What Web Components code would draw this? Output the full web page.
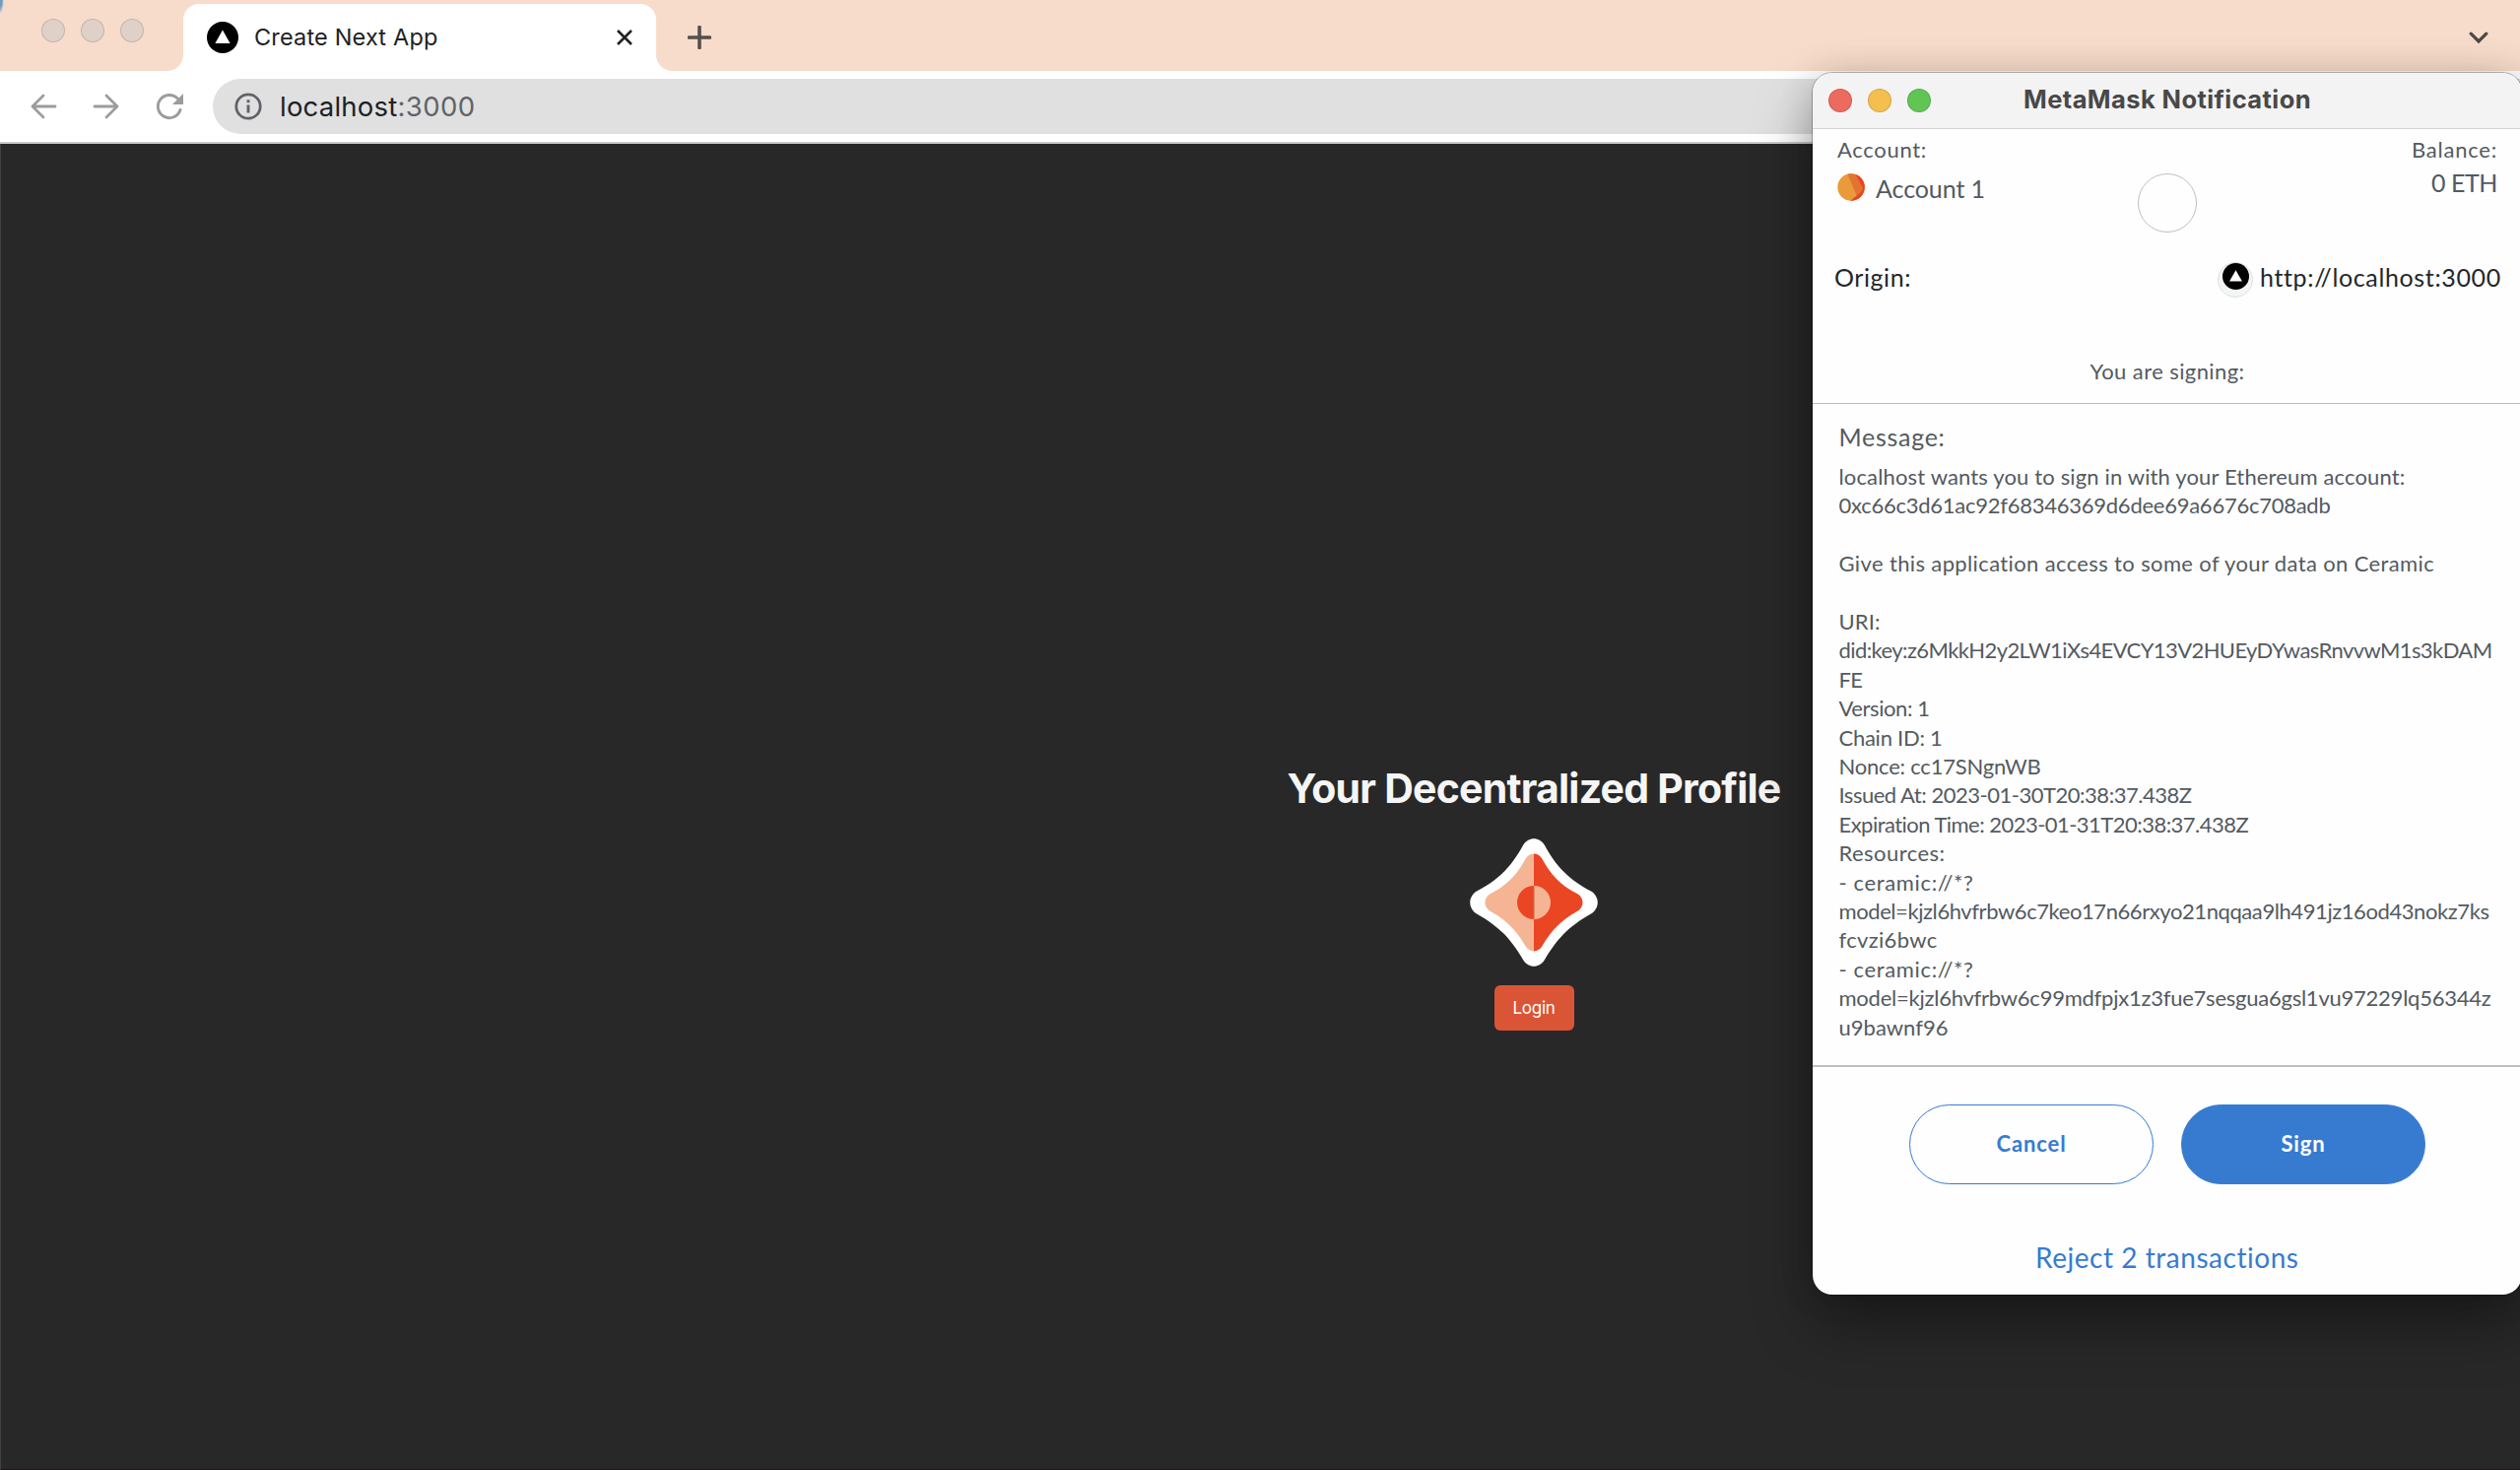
<!DOCTYPE html>
<html lang="en">
<head>
<meta charset="utf-8">
<title>Create Next App</title>
<style>
html,body{margin:0;padding:0;background:#282828}
body{width:2558px;height:1492px;overflow:hidden;font-family:Inter,"Liberation Sans",sans-serif}
</style>
</head>
<body>
<desktop-screen></desktop-screen>
<script>
const define = (name, html, cb) => customElements.define(name, class extends HTMLElement {
  connectedCallback() {
    if (this.shadowRoot) return;
    const t = document.createElement('template');
    t.innerHTML = html;
    this.attachShadow({mode: 'open'}).append(t.content.cloneNode(true));
    if (cb) cb(this);
  }
});

/* A single line of text tracked out to the width given in its w attribute. */
define('tracked-text', `<style>
:host{display:block;white-space:pre;flex:none}
span{display:inline-block}
</style><span><slot></slot></span>`, el => {
  const w = +el.getAttribute('w');
  el.style.width = w + 'px';
  const s = el.shadowRoot.querySelector('span');
  const n = el.textContent.length;
  const d = (w - s.getBoundingClientRect().width) / n;
  s.style.letterSpacing = d.toFixed(3) + 'px';
});

define('traffic-lights', `<style>
:host{display:flex;gap:16px}
i{width:24px;height:24px;border-radius:50%;box-sizing:border-box;border:1px solid rgba(0,0,0,.13)}
i:nth-of-type(1){background:var(--a,#dfd0c8)}
i:nth-of-type(2){background:var(--b,#dfd0c8)}
i:nth-of-type(3){background:var(--c,#dfd0c8)}
</style><i></i><i></i><i></i>`);

define('next-favicon', `<style>
:host{display:block;width:32px;height:32px;flex:none}svg{display:block;width:100%;height:100%}
</style><svg viewBox="0 0 32 32"><circle cx="16" cy="16" r="16" fill="#000"/><path d="M16 8.6 23.6 22H8.4Z" fill="#fff"/></svg>`);

define('tab-strip', `<style>
:host{display:flex;height:72px;background:radial-gradient(ellipse 4px 14px at 0 0,#6d9cc4 0,#6d9cc4 50%,transparent 100%),#f7dccb;align-items:flex-start}
traffic-lights{margin:19px 0 0 42px;width:104px;flex:none}
.tab{position:relative;margin:4px 0 0 40px;width:480px;height:68px;box-sizing:border-box;background:#fff;border-radius:16px 16px 0 0;display:flex;align-items:center;padding:0 24px;flex:none}
.tab:before,.tab:after{content:"";position:absolute;bottom:0;width:16px;height:16px}
.tab:before{left:-16px;background:radial-gradient(circle at 0 0,transparent 15.5px,#fff 16.2px)}
.tab:after{right:-16px;background:radial-gradient(circle at 100% 0,transparent 15.5px,#fff 16.2px)}
.title{margin-left:16px;font-size:23.5px;line-height:30px;color:#202124}
.x{margin-left:auto}
.plus{margin:26px 0 0 32px}
.chev{margin:32px 32px 0 auto}
svg{display:block}
</style>
<traffic-lights></traffic-lights>
<div class="tab"><next-favicon></next-favicon><tracked-text class="title" w="186.5">Create Next App</tracked-text>
<svg class="x" width="16" height="16" viewBox="0 0 16 16"><path d="M1 1 15 15M15 1 1 15" stroke="#202124" stroke-width="2.6"/></svg></div>
<svg class="plus" width="24" height="24" viewBox="0 0 24 24"><path d="M12 1.5V22.500M1.500 12H22.500" stroke="#574f4b" stroke-width="3.6" stroke-linecap="round"/></svg>
<svg class="chev" width="20" height="13" viewBox="0 0 20 13"><path d="M2.200 2.200 10 10 17.800 2.200" fill="none" stroke="#4e4845" stroke-width="3.2" stroke-linecap="round"/></svg>`);

define('tool-bar', `<style>
:host{display:flex;height:74px;box-sizing:border-box;background:#fff;border-bottom:2px solid #c9cccb;align-items:center}
svg{display:block;flex:none}
.b{margin-left:30px}.f{margin-left:36px}.r{margin-left:36px}
.omni{margin-left:30px;flex:1;height:56px;border-radius:28px 0 0 28px;background:#e0e0e0;display:flex;align-items:center;padding-left:22px}
.url{margin-left:18px;font-size:27.5px;line-height:36px;color:#202124;display:flex}
.port{color:#5f6368}
</style>
<svg class="b" width="28" height="26" viewBox="0 0 28 26"><path d="M26 13H3M14 2 3 13 14 24" fill="none" stroke="#9c9c9c" stroke-width="2.800" stroke-linecap="round" stroke-linejoin="round"/></svg>
<svg class="f" width="28" height="26" viewBox="0 0 28 26"><path d="M2 13H25M14 2 25 13 14 24" fill="none" stroke="#9c9c9c" stroke-width="2.800" stroke-linecap="round" stroke-linejoin="round"/></svg>
<svg class="r" width="28" height="28" viewBox="0 0 28 28"><path d="M25 17.500A11.600 11.600 0 1 1 22.300 6" fill="none" stroke="#9c9c9c" stroke-width="2.900" stroke-linecap="round"/><path d="M28 1V12H17Z" fill="#9c9c9c"/></svg>
<div class="omni"><svg width="28" height="28" viewBox="0 0 28 28"><circle cx="14" cy="14" r="12.200" fill="none" stroke="#5f6368" stroke-width="2.800"/><path d="M14 12.500V20.500" stroke="#5f6368" stroke-width="2.900"/><path d="M14 7.300V10.200" stroke="#5f6368" stroke-width="2.900"/></svg>
<div class="url"><tracked-text w="119.5">localhost</tracked-text><tracked-text class="port" w="79">:3000</tracked-text></div></div>`);

define('ceramic-logo', `<style>:host{display:block;width:130px;height:130px}svg{display:block}</style>
<svg width="130" height="130" viewBox="-65 -65 130 130">
<defs><path id="s" d="M-11-58C-6-67 6-67 11-58C22-38 34-24 58-11.500C67-6 67 6 58 11.500C34 25 23 38 11 58C6 67-6 67-11 58C-23 38-34 25-58 11.500C-67 6-67-6-58-11.500C-34-24-22-38-11-58Z"/>
<clipPath id="l"><rect x="-65" y="-65" width="65" height="130"/></clipPath><clipPath id="r"><rect x="0" y="-65" width="65" height="130"/></clipPath></defs>
<use href="#s" fill="#fff"/>
<g clip-path="url(#l)"><use href="#s" transform="scale(.765)" fill="#f5b493"/><circle r="17" fill="#ea4624"/></g>
<g clip-path="url(#r)"><use href="#s" transform="scale(.765)" fill="#ea4624"/><circle r="17" fill="#f5b493"/></g>
<path d="M0-16.500V16.500" stroke="#c96a48" stroke-width="1"/></svg>`);

define('login-page', `<style>
:host{display:flex;flex-direction:column;align-items:center;height:1346px;box-sizing:border-box;background:#282828;padding:629px 0 0 555px;border-left:1px solid #424242;border-bottom:1px solid #1c1518}
h1{margin:0;font-size:41px;line-height:50px;font-weight:700;color:#f5f5f5}
ceramic-logo{margin-top:26px}
button{margin:19px 0 0;width:81px;height:46px;padding:0;border:0;border-radius:6px;background:#da5536;color:#fff;font:400 17px/46px Inter,sans-serif;display:flex;justify-content:center}
</style>
<h1><tracked-text w="501">Your Decentralized Profile</tracked-text></h1>
<ceramic-logo></ceramic-logo>
<button><tracked-text w="43">Login</tracked-text></button>`);

define('message-body', `<style>
:host{display:block;box-sizing:border-box;height:673px;padding:16px 0 0 26.500px;border-bottom:2px solid #bbc0c5;color:#535a61;font-size:22px;line-height:29.4px}
.h{font-size:25px;line-height:34px;margin-bottom:9px}
.gap{height:29.4px}
</style>
<tracked-text class="h" w="108">Message:</tracked-text>
<tracked-text w="575">localhost wants you to sign in with your Ethereum account:</tracked-text>
<tracked-text w="499">0xc66c3d61ac92f68346369d6dee69a6676c708adb</tracked-text>
<div class="gap"></div>
<tracked-text w="605">Give this application access to some of your data on Ceramic</tracked-text>
<div class="gap"></div>
<tracked-text w="42">URI:</tracked-text>
<tracked-text w="663">did:key:z6MkkH2y2LW1iXs4EVCY13V2HUEyDYwasRnvvwM1s3kDAM</tracked-text>
<tracked-text w="24">FE</tracked-text>
<tracked-text w="92">Version: 1</tracked-text>
<tracked-text w="105">Chain ID: 1</tracked-text>
<tracked-text w="205">Nonce: cc17SNgnWB</tracked-text>
<tracked-text w="358">Issued At: 2023-01-30T20:38:37.438Z</tracked-text>
<tracked-text w="416">Expiration Time: 2023-01-31T20:38:37.438Z</tracked-text>
<tracked-text w="108">Resources:</tracked-text>
<tracked-text w="137">- ceramic://*?</tracked-text>
<tracked-text w="660">model=kjzl6hvfrbw6c7keo17n66rxyo21nqqaa9lh491jz16od43nokz7ks</tracked-text>
<tracked-text w="100">fcvzi6bwc</tracked-text>
<tracked-text w="137">- ceramic://*?</tracked-text>
<tracked-text w="662">model=kjzl6hvfrbw6c99mdfpjx1z3fue7sesgua6gsl1vu97229lq56344z</tracked-text>
<tracked-text w="111">u9bawnf96</tracked-text>`);

define('account-header', `<style>
:host{display:flex;flex-direction:column;height:279px;box-sizing:border-box;border-bottom:1.500px solid #bbbdc0;color:#535a61;font-size:22px}
.top{display:flex;justify-content:space-between;padding:5.500px 25px 0 25px;height:108px;box-sizing:border-box}
.side{display:flex;flex-direction:column;width:180px}
.side.r{align-items:flex-end}
.lab{line-height:30px}
.acct{display:flex;margin-top:9.500px}
.acct tracked-text{font-size:25px;line-height:34px;margin:-2px 0 0 11px}
.eth{font-size:25px;line-height:34px;margin-top:1.500px}
.ring{width:60px;height:60px;box-sizing:border-box;border:1.500px solid #bbc0c5;border-radius:50%;margin-top:39.500px}
.origin{display:flex;align-items:center;color:#24272a;font-size:25px;line-height:36px;padding:0 22px 0 22px;margin-top:27px;height:36px;flex:none}
.origin tracked-text{margin-bottom:6px}
.chip{margin-left:auto;width:36px;height:36px;box-sizing:border-box;border:1px solid #dfe2e5;background:#f2f4f6;border-radius:50%;display:flex;justify-content:center;margin-right:7px}
.chip next-favicon{width:27px;height:27px}
.sign{align-self:center;line-height:30px;margin-top:59.500px}
</style>
<div class="top"><div class="side"><tracked-text class="lab" w="91">Account:</tracked-text>
<div class="acct"><svg width="28" height="28" viewBox="0 0 28 28"><defs><clipPath id="c"><circle cx="14" cy="14" r="13.700"/></clipPath></defs><g clip-path="url(#c)"><rect width="28" height="28" fill="#e99a3a"/><path d="M10 0H28V28H22Z" fill="#e17432"/><path d="M18 0H28V28H13L24 19 26 15Z" fill="#ea4424"/></g></svg><tracked-text w="111">Account 1</tracked-text></div></div>
<div class="ring"></div>
<div class="side r"><tracked-text class="lab" w="87">Balance:</tracked-text><tracked-text class="eth" w="67">0 ETH</tracked-text></div></div>
<div class="origin"><tracked-text w="78">Origin:</tracked-text><div class="chip"><next-favicon></next-favicon></div><tracked-text w="244">http://localhost:3000</tracked-text></div>
<tracked-text class="sign" w="157">You are signing:</tracked-text>`);

define('metamask-window', `<style>
:host{display:flex;flex-direction:column;width:720px;height:1240px;background:#fefefe;border-radius:20px;overflow:hidden;font-family:Lato,sans-serif;box-shadow:0 0 0 1px rgba(0,0,0,.25),0 30px 60px rgba(0,0,0,.36),0 0 36px rgba(0,0,0,.14)}
header{display:flex;align-items:center;height:57px;box-sizing:border-box;border-bottom:1px solid #d2d2d2;background:#f3f3f3;padding-left:16px;flex:none}
traffic-lights{--a:#ec6a5e;--b:#f4bf4f;--c:#61c554;width:104px}
.t{font:700 25.500px/34px Inter,sans-serif;color:#484848;margin:0 0 2px 94px}
account-header,message-body{flex:none}
.btns{display:flex;justify-content:center;gap:28px;margin-top:38px}
.btn{width:248px;height:81px;box-sizing:border-box;border-radius:41px;border:1.500px solid #377bd0;color:#377bd0;font-size:22px;font-weight:700;line-height:30px;display:flex;align-items:center;justify-content:center;padding-bottom:2px}
.p{background:#377bd0;color:#fff}
.rej{align-self:center;margin-top:55px;color:#377bd0;font-size:28px;line-height:38px}
</style>
<header><traffic-lights></traffic-lights><tracked-text class="t" w="292">MetaMask Notification</tracked-text></header>
<account-header></account-header>
<message-body></message-body>
<div class="btns"><div class="btn"><tracked-text w="71">Cancel</tracked-text></div><div class="btn p"><tracked-text w="45">Sign</tracked-text></div></div>
<tracked-text class="rej" w="268">Reject 2 transactions</tracked-text>`);

define('desktop-screen', `<style>
:host{display:block;position:relative;width:2558px;height:1492px;overflow:hidden}
metamask-window{position:absolute;left:1840px;top:74px}
</style><tab-strip></tab-strip><tool-bar></tool-bar><login-page></login-page><metamask-window></metamask-window>`);
</script>
</body>
</html>
